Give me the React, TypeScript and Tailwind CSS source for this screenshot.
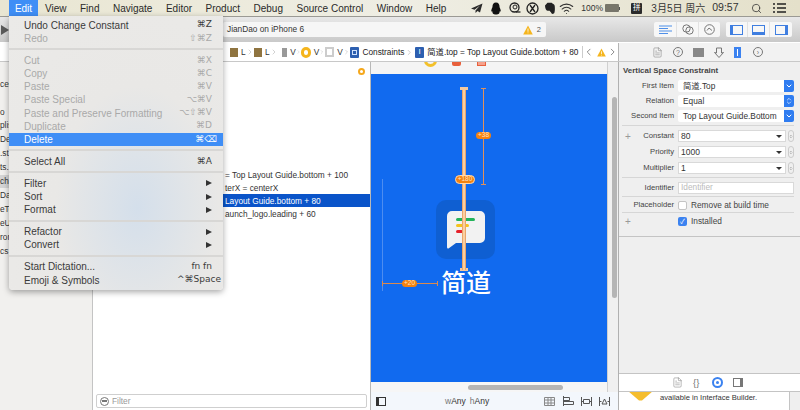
import { ChevronDown, ChevronLeft, ChevronRight, ChevronsUpDown, FileText, Search, Wifi } from "lucide-react";

const font = "font-['Liberation_Sans','Noto_Sans_CJK_SC',sans-serif]";

const menuTitles = ["View", "Find", "Navigate", "Editor", "Product", "Debug", "Source Control", "Window", "Help"];

function Warn({ size = 10 }: { size?: number }) {
  return (
    <svg width={size} height={size} viewBox="0 0 10 10">
      <path d="M5 .5 9.800 9.500H.2Z" fill="#f5b51d" />
      <path d="M4.600 3.500h.8v3.200h-.8zM4.600 7.400h.8v.9h-.8z" fill="#fff" />
    </svg>
  );
}

function MenuBar() {
  return (
    <div className="flex h-4 shrink-0 items-center whitespace-nowrap bg-gradient-to-r from-[#e9e6d2] via-[#efeee4] to-[#e4e0ca] text-[10px] text-[#2a2a2a]">
      <div className="ml-[9px] flex h-4 w-[29px] items-center justify-center bg-[#3f8ef6] text-white">Edit</div>
      <div className="ml-[7px] flex gap-[13.500px]">
        {menuTitles.map((t) => (
          <span key={t}>{t}</span>
        ))}
      </div>
      <div className="ml-[25px] flex shrink-0 items-center text-[#222]">
        <svg width="12" height="11" viewBox="0 0 12 11"><path d="M11.500.5 0 5.500l3.500 1.200L9 2.500 4.500 7.500V10l2-2 2.500 1.500Z" fill="#2b2b2b" /></svg>
        <svg className="ml-[7px]" width="12" height="13" viewBox="0 0 12 13"><path d="M6 .5c2.500 0 3.500 2 3.500 4 0 1 .5 1.500 1 3 .6 1.800 0 2.500-.8 1.800C9.500 11.500 9 12.500 6 12.500S2.500 11.500 2.300 9.300c-.8.700-1.400 0-.8-1.800.5-1.500 1-2 1-3 0-2 1-4 3.500-4Z" fill="#111" /></svg>
        <svg className="ml-[7px]" width="12" height="12" viewBox="0 0 12 12"><circle cx="5.500" cy="5.500" r="4.500" fill="none" stroke="#222" strokeWidth="1.300" /><circle cx="6" cy="5" r="2" fill="none" stroke="#222" /><path d="M7 10h4.500" stroke="#222" strokeWidth="1.300" /></svg>
        <svg className="ml-[5px]" width="13" height="13" viewBox="0 0 13 13"><circle cx="6.500" cy="6.500" r="5.500" fill="none" stroke="#222" strokeWidth="1.300" /><path d="M4 3l5 7M9 3l-5 7" stroke="#222" strokeWidth="1.300" /></svg>
        <svg className="ml-[5px]" width="12" height="13" viewBox="0 0 12 13"><path d="M1 3.500 3.500.8h4.200c.8 1 2.800 1.200 3 3 .3 2.700.3 5-.3 7-.5 1.500-3 1.500-3.200 0-.1-1-1.500-1-1.500-2H3.500C2 8.500 1 6 1 3.500Z" fill="#222" /></svg>
        <Wifi size={15} strokeWidth={1.700} className="ml-[3px] text-[#333]" />
        <span className="ml-[7px] w-[22px] text-[8.500px] text-[#333]">100%</span>
        <div className="ml-[2px] h-[8px] w-[14px] rounded-[1px] bg-[#77756a]" />
        <div className="h-[3px] w-[1px] bg-[#555]" />
        <div className="ml-[11px] flex h-[11px] w-[11px] items-center justify-center rounded-[1px] bg-[#2b2b2b] text-[7.500px] leading-none text-white">拼</div>
        <span className="ml-[9px] text-[10px] text-[#333]">3月5日 周六</span>
        <span className="ml-[7px] text-[10.500px] text-[#333]">09:57</span>
        <Search size={11} strokeWidth={1.700} className="ml-[12px] text-[#333]" />
        <svg className="ml-[11px]" width="13" height="10" viewBox="0 0 13 10"><path d="M0 1h2M4 1h9M0 5h2M4 5h9M0 9h2M4 9h9" stroke="#222" strokeWidth="1.300" /></svg>
      </div>
    </div>
  );
}

function ToolBtn({ children, w }: { children: React.ReactNode; w: string }) {
  return <div className={`flex h-[15px] items-center justify-center border-r border-[#e2e2e2] bg-[#f7f7f7] last:border-r-0 ${w}`}>{children}</div>;
}

function Toolbar() {
  return (
    <div className="flex h-[26px] shrink-0 items-center border-t border-[#9b9a94] bg-gradient-to-b from-[#e8e8e8] to-[#c9c9c9] pl-[1px]">
      <svg width="8" height="10" viewBox="0 0 8 10"><path d="M0 0 8 5 0 10Z" fill="#5a5a5a" /></svg>
      <div className="ml-[214px] flex h-[15px] w-[323px] items-center justify-between rounded-[2px] bg-[#f6f6f6] pr-[5px] pl-[4px] text-[8.300px] text-[#333]">
        <span>JianDao on iPhone 6</span>
        <span className="flex items-center gap-[4px] text-[7.500px] text-[#555]"><Warn />2</span>
      </div>
      <div className="ml-[108px] flex overflow-hidden rounded-[2px]">
        <ToolBtn w="w-[23px]">
          <svg width="13" height="10" viewBox="0 0 13 10"><path d="M0 1h13M0 3.500h9M0 6h13M0 8.500h9" stroke="#4f8fe8" strokeWidth="1.200" /></svg>
        </ToolBtn>
        <ToolBtn w="w-[22px]">
          <svg width="12" height="11" viewBox="0 0 12 11"><circle cx="4.500" cy="4.500" r="3.700" fill="none" stroke="#777" /><circle cx="7.500" cy="6.500" r="3.700" fill="none" stroke="#777" /></svg>
        </ToolBtn>
        <ToolBtn w="w-[21px]">
          <svg width="11" height="11" viewBox="0 0 11 11"><circle cx="5.500" cy="5.500" r="4.800" fill="none" stroke="#777" /><path d="M3 6.500 5 4l3 2.500" fill="none" stroke="#777" /></svg>
        </ToolBtn>
      </div>
      <div className="ml-[6px] flex overflow-hidden rounded-[2px]">
        {["border-l-[3px]", "border-b-[3px]", "border-r-[3px]"].map((c) => (
          <ToolBtn key={c} w="w-[22px]">
            <div className={`h-[10px] w-[13px] border border-[#3f7ee0] ${c}`} />
          </ToolBtn>
        ))}
      </div>
    </div>
  );
}

function Crumb({ icon, w, letter }: { icon: React.ReactNode; w: string; letter: string }) {
  return (
    <span className={`flex shrink-0 items-center text-[8.300px] text-[#333] ${w}`}>
      {icon}
      <span className="ml-[3px]">{letter}</span>
      <ChevronRight size={8} strokeWidth={1} className="text-[#777]" />
    </span>
  );
}

function PathBar() {
  const doc = <span className="h-[9px] w-[8px] bg-[#8f7440]" />;
  return (
    <div className="flex h-5 shrink-0 border-b border-[#c8c8c8] bg-white pt-[1px]">
      <div className="flex h-full w-[618px] items-center pl-[230px] text-[8.300px] whitespace-nowrap text-[#222]">
        <Crumb icon={doc} w="w-[24px]" letter="L" />
        <Crumb icon={doc} w="w-[28px]" letter="L" />
        <Crumb icon={<span className="h-[9px] w-[8px] bg-[#999]" />} w="w-[19px]" letter="V" />
        <Crumb icon={<span className="h-[11px] w-[11px] rounded-full border-[3px] border-[#f5b51d]" />} w="w-[24px]" letter="V" />
        <Crumb icon={<span className="h-[10px] w-[10px] border-2 border-[#ccc]" />} w="w-[25px]" letter="V" />
        <div className="mr-[3px] flex h-[11px] w-[10px] items-center justify-center rounded-[1px] bg-[#2d5fb0]">
          <div className="h-[5px] w-[5px] border border-[#cfe0fa]" />
        </div>
        <span>Constraints</span>
        <ChevronRight size={9} strokeWidth={1} className="ml-[1px] text-[#777]" />
        <div className="mr-[3px] ml-[1px] flex h-[11px] w-[10px] items-center justify-center rounded-[1px] bg-[#2d5fb0] text-[8px] leading-none text-white">I</div>
        <span>简道.top = Top Layout Guide.bottom + 80</span>
        <div className="ml-[4px] h-3 w-px bg-[#ccc]" />
        <ChevronLeft size={12} strokeWidth={1.300} className="text-[#444]" />
        <span className="ml-[2px]"><Warn size={9} /></span>
        <ChevronRight size={12} strokeWidth={1.300} className="ml-[1px] text-[#444]" />
      </div>
      <div className="flex flex-1 items-center gap-[10px] border-l border-[#b5b5b5] bg-[#f2f2f2] pl-[33px] text-[#777]">
        <FileText size={11} strokeWidth={1.100} />
        <span className="flex h-[10px] w-[10px] items-center justify-center rounded-full border border-[#777] text-[7px] leading-none">?</span>
        <div className="h-[9px] w-[11px] bg-[#888]" />
        <svg width="10" height="11" viewBox="0 0 10 11"><path d="M2.500 1h5v5l2-.5L5 10.500.5 5.500l2 .5Z" fill="none" stroke="#777" /></svg>
        <div className="flex h-[11px] w-[7px] items-center justify-center bg-[#3b82f0]"><div className="h-[7px] w-px bg-white" /></div>
        <span className="ml-[2px] flex h-[10px] w-[10px] items-center justify-center rounded-full border border-[#777] text-[7px] leading-none">›</span>
      </div>
    </div>
  );
}

const navRows = [
  ["ces", "mt-[16px]", ""],
  ["o", "mt-[15px]", ""],
  ["plis", "mt-0", ""],
  ["Del", "mt-[1px]", ""],
  [".st", "mt-[1px]", ""],
  ["ts.", "mt-[1px]", ""],
  ["ch", "mt-[1px]", "bg-[#d4d4d4]"],
  ["Dac", "mt-[1px]", ""],
  ["eTe", "mt-[1px]", ""],
  ["eUI", "mt-[1px]", ""],
  ["ror", "mt-[1px]", ""],
  ["cs", "mt-[1px]", ""],
];

function Navigator() {
  return (
    <div className="w-[93px] shrink-0 border-r border-[#c4c4c4] bg-[#f1f0ee]">
      {navRows.map(([t, m, c]) => (
        <div key={t} className={`flex h-[13px] items-center text-[8.300px] text-[#333] ${m} ${c}`}>{t}</div>
      ))}
    </div>
  );
}

function Outline() {
  return (
    <div className="flex w-[277px] shrink-0 flex-col bg-white text-[8.300px] text-[#333]">
      <div className="flex h-[19px] items-center justify-end pr-[5px]">
        <span className="h-[7px] w-[7px] rounded-full border-2 border-[#f5a81d]" />
      </div>
      <div className="mt-[87px] flex h-[13px] items-center pt-[1px] pl-[132px]">= Top Layout Guide.bottom + 100</div>
      <div className="flex h-[13px] items-center pt-[1px] pl-[132px]">terX = centerX</div>
      <div className="flex h-[13px] items-center bg-[#0a54c9] pt-[1px] pl-[132px] text-white">Layout Guide.bottom + 80</div>
      <div className="flex h-[13px] items-center pt-[1px] pl-[132px]">aunch_logo.leading + 60</div>
      <div className="mt-auto mb-[2px] ml-[3px] flex h-[14px] w-[271px] items-center rounded-[2px] border border-[#cfcfcf] pl-[3px] text-[#999]">
        <span className="mr-[3px] flex h-[9px] w-[9px] items-center justify-center rounded-full border border-[#777]"><span className="h-[2px] w-[5px] bg-[#777]" /></span>
        Filter
      </div>
    </div>
  );
}

function Canvas() {
  return (
    <div className="flex w-[248px] shrink-0 flex-col border-l border-[#b8b8b8] bg-[#f5f5f5]">
      <div className="relative flex min-h-0 flex-1">
        <div className="flex w-[236px] shrink-0 flex-col">
          <div className="relative h-3 shrink-0 overflow-hidden bg-[#f4f4f4]">
            <span className="absolute top-[-8px] left-[53px] h-[13px] w-[13px] rounded-full border-[3px] border-[#f3c02a]" />
            <span className="absolute top-[-3px] left-[81px] h-[7px] w-[9px] rounded-[2px] bg-[#e8603c]" />
            <span className="absolute top-[-3px] left-[106px] h-[7px] w-[9px] border border-[#e8603c] bg-[#f5a18c]" />
          </div>
          <div className="relative flex-1 bg-[#116aef]">
            {/* thick constraint line */}
            <div className="absolute top-[14px] left-[91px] h-[182px] w-[4px] border-x border-[#e9a56c] bg-[#fbcfa0]" />
            <div className="absolute top-[13px] left-[89px] h-[3px] w-[8px] bg-[#f4c9a0]" />
            <div className="absolute top-[194px] left-[89px] h-[3px] w-[8px] bg-[#f4c9a0]" />
            {/* thin +38 line */}
            <div className="absolute top-[14px] left-[112px] h-[96px] w-px bg-[#e0915a]" />
            <div className="absolute top-[14px] left-[110px] h-px w-[5px] bg-[#e0915a]" />
            <div className="absolute top-[110px] left-[110px] h-px w-[5px] bg-[#e0915a]" />
            <div className="absolute top-[58px] left-[105px] flex h-[7px] w-[15px] items-center justify-center rounded-full bg-[#f5820f] text-[6.500px] leading-none text-[#fde3c4]">+38</div>
            <div className="absolute top-[101px] left-[84px] flex h-[9px] w-[20px] items-center justify-center rounded-full border border-[#ffd9b0] bg-[#f5820f] text-[6.500px] leading-none text-[#fde3c4]">+180</div>
            {/* app icon */}
            <div className="absolute top-[126px] left-[65px] flex h-[59px] w-[59px] items-center justify-center rounded-[10px] bg-[#0f5fd2]">
              <svg width="38" height="38" viewBox="0 0 38 38">
                <path d="M5 0h28a5 5 0 0 1 5 5v22a5 5 0 0 1-5 5H9L1.500 37.500Q0 38 0 36V5a5 5 0 0 1 5-5Z" fill="#f2f2f2" />
                <rect x="9" y="7" width="19" height="3" rx="1.500" fill="#24b35a" />
                <rect x="9" y="13" width="13" height="3" rx="1.500" fill="#f5c31d" />
                <rect x="9" y="19" width="7" height="3" rx="1.500" fill="#e5202a" />
              </svg>
            </div>
            <div className="absolute top-[126px] left-[91px] h-[70px] w-[4px] border-x border-[#e9a56c] bg-[#fbcfa0]" />
            <div className="absolute top-[195px] left-[70px] text-[25px] leading-[28px] font-medium text-white">简道</div>
            {/* +20 line */}
            <div className="absolute top-[105px] left-[11px] h-[112px] w-px bg-[#4d8df0]" />
            <div className="absolute top-[209px] left-[11px] h-px w-[56px] bg-[#d98a50]" />
            <div className="absolute top-[207px] left-[66px] h-[5px] w-px bg-[#d98a50]" />
            <div className="absolute top-[207px] left-[11px] h-[5px] w-px bg-[#d98a50]" />
            <div className="absolute top-[206px] left-[31px] flex h-[7px] w-[15px] items-center justify-center rounded-full bg-[#f5820f] text-[6.500px] leading-none text-[#fde3c4]">+20</div>
          </div>
          <div className="flex h-[10px] shrink-0 items-center bg-[#f6f6f6] pl-[97px]">
            <div className="h-[5px] w-[95px] rounded-full bg-[#b5b5b5]" />
          </div>
        </div>
        <div className="flex flex-1 border-l border-[#d0d0d0] bg-[#f0f0f0] pt-[35px] pl-[4px]">
          <div className="h-[201px] w-[5px] rounded-full bg-[#b5b5b5]" />
        </div>
      </div>
      <div className="flex h-[18px] shrink-0 items-center bg-[#f3f7fc] pl-[5px] text-[8.500px] text-[#333]">
        <div className="h-[9px] w-[10px] border border-[#333] border-l-[3px]" />
        <span className="ml-[59px] text-[#777]">w</span><span>Any</span>
        <span className="ml-[4px] text-[#777]">h</span><span>Any</span>
        <svg className="ml-[55px]" width="11" height="9" viewBox="0 0 11 9"><path d="M.5.5h10v8H.5zM.5 3h10M.5 6h10M4 .5v8M7 .5v8" fill="none" stroke="#888" /></svg>
        <svg className="ml-[8px]" width="11" height="10" viewBox="0 0 11 10"><path d="M.5 0v10M.5 1.500h6v3h-6M.5 5.500h10v3H.5" fill="none" stroke="#555" /></svg>
        <svg className="ml-[7px]" width="11" height="9" viewBox="0 0 11 9"><path d="M.5 0v9M10.500 0v9M.5 4.500h2M8.500 4.500h2M2.500 2.500h6v4h-6z" fill="none" stroke="#555" /></svg>
        <svg className="ml-[7px]" width="11" height="9" viewBox="0 0 11 9"><path d="M.5 0v9M10.500 0v9M.5 4.500h2M8.500 4.500h2M3 7 5.500 2 8 7Z" fill="none" stroke="#555" /></svg>
      </div>
    </div>
  );
}

function FormRow({ label, children, plus, mt = "mt-0" }: { label: string; children: React.ReactNode; plus?: boolean; mt?: string }) {
  return (
    <div className={`flex h-[13px] items-center ${mt}`}>
      <span className="w-[9px] pl-[3px] text-[10px] text-[#999]">{plus ? "+" : ""}</span>
      <span className="w-[43px] text-right text-[7.700px] whitespace-nowrap text-[#444]">{label}</span>
      <div className="ml-[4px] flex-1">{children}</div>
    </div>
  );
}

function BlueSelect({ value, updown }: { value: string; updown?: boolean }) {
  return (
    <div className="mr-[6px] flex h-[11.500px] items-center justify-between rounded-[2px] bg-white pl-[5px] text-[8.300px] text-[#333]">
      {value}
      <span className="flex h-[11.500px] w-[10px] items-center justify-center rounded-r-[2px] bg-[#2f7cf0] text-white">
        {updown ? <ChevronsUpDown size={8} /> : <ChevronDown size={8} strokeWidth={3} />}
      </span>
    </div>
  );
}

function Combo({ value }: { value: string }) {
  return (
    <div className="flex items-center">
      <div className="flex h-[12px] w-[108px] items-center justify-between border border-[#d9d9d9] bg-white pr-[3px] pl-[2px] text-[8.500px] text-[#333]">
        {value}
        <span className="h-0 w-0 border-x-[3px] border-t-[3px] border-x-transparent border-t-[#333]" />
      </div>
      <span className="ml-[2px] flex h-[12px] w-[6px] items-center justify-center rounded-full border border-[#ccc] text-[#555]">
        <ChevronsUpDown size={7} />
      </span>
    </div>
  );
}

function Inspector() {
  return (
    <div className="flex flex-1 flex-col border-l border-[#b0b0b0] bg-[#efefef]">
      <div className="h-[175px] shrink-0 border-b border-[#c4c4c4] pl-[3px]">
        <div className="mt-[2px] mb-[2.500px] h-[13px] pl-[1px] text-[7.900px] leading-[13px] font-bold text-[#444]">Vertical Space Constraint</div>
        <FormRow label="First Item"><BlueSelect value="简道.Top" /></FormRow>
        <FormRow label="Relation" mt="mt-[2px]"><BlueSelect value="Equal" updown /></FormRow>
        <FormRow label="Second Item" mt="mt-[2px]"><BlueSelect value="Top Layout Guide.Bottom" /></FormRow>
        <div className="mt-[2.500px] mr-[6px] h-px bg-[#d6d6d6]" />
        <FormRow label="Constant" plus mt="mt-[3.500px]"><Combo value="80" /></FormRow>
        <FormRow label="Priority" mt="mt-[3px]"><Combo value="1000" /></FormRow>
        <FormRow label="Multiplier" mt="mt-[3px]"><Combo value="1" /></FormRow>
        <div className="mt-[2.500px] mr-[6px] h-px bg-[#d6d6d6]" />
        <FormRow label="Identifier" mt="mt-[3px]">
          <div className="mr-[6px] flex h-[12px] items-center border border-[#d9d9d9] bg-white pl-[2px] text-[8.300px] text-[#bbb]">Identifier</div>
        </FormRow>
        <div className="mt-[2px] mr-[6px] h-px bg-[#d6d6d6]" />
        <FormRow label="Placeholder" mt="mt-[1.500px]">
          <div className="flex items-center text-[8.300px] text-[#444]">
            <span className="mr-[4px] h-[9px] w-[9px] rounded-[2px] border border-[#c4c4c4] bg-white" />Remove at build time
          </div>
        </FormRow>
        <div className="mt-[0.500px] mr-[6px] h-px bg-[#d6d6d6]" />
        <FormRow label="" plus mt="mt-[1.500px]">
          <div className="flex items-center text-[8.300px] text-[#444]">
            <span className="mr-[4px] flex h-[9px] w-[9px] items-center justify-center rounded-[2px] bg-[#3b82f0] text-[7px] leading-none text-white">✓</span>Installed
          </div>
        </FormRow>
      </div>
      <div className="flex-1" />
      <div className="flex h-[19px] shrink-0 items-center gap-[10px] border-y border-[#c4c4c4] bg-white pl-[53px] text-[#777]">
        <FileText size={11} strokeWidth={1.100} />
        <span className="w-[9px] text-[9.500px] leading-none">{"{}"}</span>
        <span className="flex h-[11px] w-[11px] items-center justify-center rounded-full border-2 border-[#3b82f0]"><span className="h-[3px] w-[3px] rounded-full bg-[#3b82f0]" /></span>
        <div className="h-[9px] w-[10px] border border-[#777] border-r-[3px]" />
      </div>
      <div className="flex h-[18px] shrink-0 overflow-hidden bg-[#efefef]">
        <div className="flex w-[171px] border-r border-[#c4c4c4] bg-white pl-[9px] text-[7.600px] text-[#333]">
          <svg className="mt-[-1px]" width="25" height="10" viewBox="0 0 25 10"><path d="M0 0h25L14 9.500h-3Z" fill="#f5bd2d" /></svg>
          <span className="ml-[7px] leading-[11px] whitespace-nowrap">available in Interface Builder.</span>
        </div>
      </div>
    </div>
  );
}

type Item = { l?: string; k?: string; pr?: string; dim?: boolean; sel?: boolean; sub?: boolean; sep?: boolean };

const items: Item[] = [
  { l: "Undo Change Constant", k: "⌘Z" },
  { l: "Redo", k: "⇧⌘Z", dim: true },
  { sep: true },
  { l: "Cut", k: "⌘X", dim: true },
  { l: "Copy", k: "⌘C", dim: true },
  { l: "Paste", k: "⌘V", dim: true },
  { l: "Paste Special", k: "⌥⌘V", dim: true },
  { l: "Paste and Preserve Formatting", k: "⌥⇧⌘V", dim: true },
  { l: "Duplicate", k: "⌘D", dim: true },
  { l: "Delete", k: "⌘⌫", sel: true, pr: "pr-[6px]" },
  { sep: true },
  { l: "Select All", k: "⌘A" },
  { sep: true },
  { l: "Filter", sub: true },
  { l: "Sort", sub: true },
  { l: "Format", sub: true },
  { sep: true },
  { l: "Refactor", sub: true },
  { l: "Convert", sub: true },
  { sep: true },
  { l: "Start Dictation...", k: "fn fn" },
  { l: "Emoji & Symbols", k: "^⌘Space", pr: "pr-[2px]" },
];

function EditMenu() {
  return (
    <div className="absolute top-4 left-[9px] w-[214px] rounded-b-[4px] bg-[radial-gradient(ellipse_at_60%_70%,#d4dfeb_0%,#e9e8e6_45%,#ebeae8_100%)] pt-[2.500px] pb-[3px] text-[10px] shadow-[0_2px_6px_rgba(0,0,0,0.35)]">
      {items.map((it, i) =>
        it.sep ? (
          <div key={i} className="my-[3.500px] h-[1.800px] bg-[#d8d7d5]" />
        ) : (
          <div
            key={i}
            className={`flex h-[13.200px] items-center justify-between pl-[15px] ${it.pr ?? "pr-[11px]"} ${it.sel ? "bg-[#3f8ef6] text-white" : it.dim ? "text-[#a9a9a9]" : "text-[#3a3a3a]"}`}
          >
            <span className="whitespace-nowrap">{it.l}</span>
            {it.k && <span className="font-['DejaVu_Sans','Liberation_Sans',sans-serif] text-[9px] whitespace-nowrap">{it.k}</span>}
            {it.sub && <span className="h-0 w-0 border-y-[3.500px] border-l-[6px] border-y-transparent border-l-[#333]" />}
          </div>
        ),
      )}
    </div>
  );
}

export default function App() {
  return (
    <div className={`relative flex h-[410px] w-[800px] flex-col overflow-hidden bg-white ${font}`}>
      <MenuBar />
      <Toolbar />
      <PathBar />
      <div className="flex min-h-0 flex-1">
        <Navigator />
        <Outline />
        <Canvas />
        <Inspector />
      </div>
      <EditMenu />
    </div>
  );
}
